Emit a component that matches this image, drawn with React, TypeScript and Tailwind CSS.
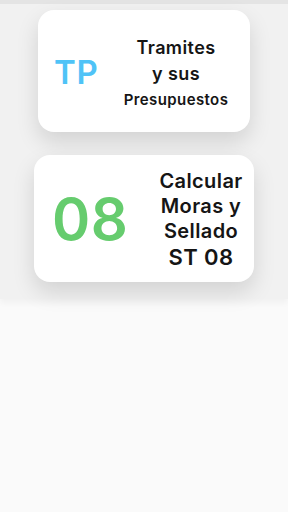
const font = { fontFamily: 'Inter, "Noto Sans", sans-serif' };

function MenuCard({
  code,
  codeClass,
  lines,
  className,
  textClass,
}: {
  code: string;
  codeClass: string;
  lines: { text: string; size: string }[];
  className: string;
  textClass: string;
}) {
  return (
    <div
      className={`flex items-center rounded-[16px] bg-white shadow-[0_10px_22px_rgba(0,0,0,0.13)] ${className}`}
    >
      <div className={`font-semibold leading-none ${codeClass}`}>{code}</div>
      <div className={`flex flex-col items-center text-center text-[#151515] font-semibold tracking-[0.4px] ${textClass}`}>
        {lines.map((l) => (
          <span key={l.text} className={l.size}>
            {l.text}
          </span>
        ))}
      </div>
    </div>
  );
}

export default function App() {
  return (
    <div className="min-h-[512px] w-full bg-[#fafafa]" style={font}>
      <div className="h-[4px] bg-[#e4e4e4]" />
      <div className="flex flex-col items-center gap-[23px] bg-[#f1f1f1] pt-[6px] pb-[17px] shadow-[0_4px_6px_rgba(0,0,0,0.04)]">
        <MenuCard
          code="TP"
          codeClass="text-[33px] text-[#4fc3f7] tracking-[0.6px] w-[62px] pl-[16px] pt-[2px] box-content"
          lines={[
            { text: 'Tramites', size: 'text-[18px] leading-[27px]' },
            { text: 'y sus', size: 'text-[18px] leading-[26px]' },
            { text: 'Presupuestos', size: 'text-[15px] leading-[26px]' },
          ]}
          className="h-[122px] w-[212px]"
          textClass="ml-[3px] w-[114px] pt-[4px]"
        />
        <MenuCard
          code="08"
          codeClass="text-[58px] text-[#66cc6e] tracking-[0.5px] pl-[18px] w-[104px] box-content"
          lines={[
            { text: 'Calcular', size: 'text-[20px] leading-[25px]' },
            { text: 'Moras y', size: 'text-[20px] leading-[25px]' },
            { text: 'Sellado', size: 'text-[20px] leading-[25px]' },
            { text: 'ST 08', size: 'text-[22px] leading-[27px]' },
          ]}
          className="h-[127px] w-[220px]"
          textClass="ml-[0px] w-[90px] pt-[2px]"
        />
      </div>
    </div>
  );
}
